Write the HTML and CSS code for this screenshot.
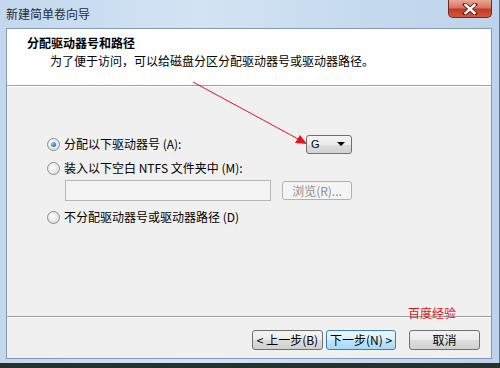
FILE: index.html
```html
<!DOCTYPE html>
<html lang="zh">
<head>
<meta charset="utf-8">
<title>新建简单卷向导</title>
<link rel="stylesheet" href="styles.css">
</head>
<body>
<div class="window">
  <div class="titlebar">
    <span class="title">新建简单卷向导</span>
    <div class="close">
      <svg width="16" height="12" viewBox="0 0 16 12"><path d="M3 1.5 L13 10.5 M13 1.5 L3 10.5" stroke="#5a1a12" stroke-width="4" stroke-linecap="square"/><path d="M3.5 2 L12.5 10 M12.5 2 L3.5 10" stroke="#ffffff" stroke-width="2.4" stroke-linecap="square"/></svg>
    </div>
  </div>
  <div class="client">
    <div class="header">
      <div class="h-title">分配驱动器号和路径</div>
      <div class="h-sub">为了便于访问，可以给磁盘分区分配驱动器号或驱动器路径。</div>
    </div>
    <div class="body">
      <div class="options">
        <div class="row row1">
          <span class="radio checked"></span>
          <span class="label">分配以下驱动器号 (A):</span>
          <div class="combo"><span class="combo-text">G</span><span class="combo-arrow"></span></div>
        </div>
        <div class="row row2">
          <span class="radio"></span>
          <span class="label">装入以下空白 NTFS 文件夹中 (M):</span>
        </div>
        <div class="row row-input">
          <div class="textbox"></div>
          <div class="btn disabled browse">浏览(R)...</div>
        </div>
        <div class="row row3">
          <span class="radio"></span>
          <span class="label">不分配驱动器号或驱动器路径 (D)</span>
        </div>
      </div>
    </div>
    <div class="footer">
      <div class="btn back">&lt; 上一步(B)</div>
      <div class="btn next">下一步(N) &gt;</div>
      <div class="btn cancel">取消</div>
    </div>
  </div>
</div>
<div class="watermark">百度经验</div>
<svg class="arrow" width="500" height="368" viewBox="0 0 500 368">
  <line x1="193" y1="82" x2="300" y2="140" stroke="#e3141b" stroke-width="1"/>
  <polygon points="307,144 295,143 300,135" fill="#e3141b"/>
</svg>
</body>
</html>
```
FILE: styles.css
```css
html, body {
  margin: 0;
  padding: 0;
}
body {
  width: 500px;
  height: 368px;
  overflow: hidden;
  background: #27312b;
  font-family: "Noto Sans CJK SC", "Liberation Sans", sans-serif;
  font-size: 12px;
  color: #000;
  position: relative;
}
.window {
  width: 500px;
  height: 363px;
  box-sizing: border-box;
  padding: 0 7px 4px 6px;
  background: linear-gradient(90deg, #c3d8ee 0%, #d3e3f4 40%, #c7dbef 70%, #bdd3eb 100%);
  border-right: 1px solid #5e7590;
  display: flex;
  flex-direction: column;
}
.titlebar {
  height: 28px;
  display: flex;
  align-items: flex-start;
}
.title {
  margin-top: 6px;
  line-height: 16px;
  color: #1e2a36;
  font-size: 12px;
}
.close {
  margin-left: auto;
  width: 44px;
  height: 18px;
  box-sizing: border-box;
  border: 1px solid #6b2a22;
  border-top: none;
  border-radius: 0 0 5px 5px;
  background: linear-gradient(#e9a797 0%, #d87462 45%, #c23a24 55%, #d2583f 100%);
  display: flex;
  align-items: center;
  justify-content: center;
}
.close svg {
  display: block;
}
.client {
  flex: 1;
  border: 1px solid #8399b3;
  background: #f0f0f0;
  display: flex;
  flex-direction: column;
}
.header {
  height: 57px;
  background: #fff;
  border-bottom: 1px solid #a0a0a0;
  padding: 7px 0 0 20px;
  box-sizing: border-box;
}
.h-title {
  font-weight: bold;
  line-height: 14px;
}
.h-sub {
  margin-left: 23px;
  margin-top: 4px;
  line-height: 14px;
}
.body {
  flex: 1;
  border-top: 1px solid #fff;
  border-bottom: 1px solid #a0a0a0;
  padding: 47px 0 0 40px;
}
.options {
  width: 305px;
  display: flex;
  flex-direction: column;
}
.row {
  display: flex;
  align-items: center;
}
.row1 { height: 20px; }
.row2 { height: 18px; margin-top: 5px; }
.row-input { height: 21px; margin-top: 3px; padding-left: 18px; }
.row3 { height: 18px; margin-top: 7px; }
.radio {
  width: 11px;
  height: 11px;
  border-radius: 50%;
  border: 1px solid #8a8c8f;
  background: radial-gradient(circle at 40% 40%, #ffffff 0%, #e6e6e6 60%, #cfcfcf 100%);
  margin-right: 4px;
  position: relative;
  flex: none;
}
.radio.checked::after {
  content: "";
  position: absolute;
  left: 3px;
  top: 3px;
  width: 5px;
  height: 5px;
  border-radius: 50%;
  background: radial-gradient(circle at 35% 35%, #8fd0ff 0%, #1f6fc0 70%, #10457e 100%);
}
.label {
  line-height: 16px;
  white-space: nowrap;
}
.combo {
  margin-left: auto;
  width: 46px;
  height: 19px;
  box-sizing: border-box;
  border: 1px solid #707070;
  border-radius: 3px;
  background: linear-gradient(#f4f4f4 0%, #ececec 50%, #dcdcdc 51%, #d4d4d4 100%);
  display: flex;
  align-items: center;
  padding: 0 6px 0 4px;
}
.combo-text {
  line-height: 14px;
  font-family: "Liberation Sans", sans-serif;
  font-size: 11px;
}
.combo-arrow {
  margin-left: auto;
  width: 0;
  height: 0;
  border-left: 4px solid transparent;
  border-right: 4px solid transparent;
  border-top: 4px solid #000;
}
.textbox {
  width: 206px;
  height: 21px;
  box-sizing: border-box;
  border: 1px solid #b4b7ba;
  background: #f3f3f3;
}
.btn {
  height: 20px;
  box-sizing: border-box;
  border: 1px solid #707070;
  border-radius: 3px;
  background: linear-gradient(#f3f3f3 0%, #ebebeb 50%, #dddddd 51%, #cfcfcf 100%);
  display: flex;
  align-items: center;
  justify-content: center;
  line-height: 14px;
  white-space: nowrap;
}
.btn.disabled {
  border-color: #adb2b5;
  background: #f4f4f4;
  color: #8f8f8f;
}
.browse {
  margin-left: auto;
  width: 70px;
  height: 19px;
}
.footer {
  height: 41px;
  border-top: 1px solid #fff;
  display: flex;
  align-items: flex-start;
  justify-content: flex-end;
  padding: 12px 11px 0 0;
  box-sizing: border-box;
}
.back { width: 71px; }
.next {
  width: 70px;
  margin-left: 3px;
  border-color: #3c7fb1;
  background: linear-gradient(#eaf6fd 0%, #d9f0fc 50%, #bee6fd 51%, #a7d9f5 100%);
}
.cancel {
  width: 71px;
  margin-left: 13px;
}
.watermark {
  position: absolute;
  left: 408px;
  top: 306px;
  color: #e3141b;
  font-size: 12px;
  line-height: 14px;
}
.arrow {
  position: absolute;
  left: 0;
  top: 0;
  pointer-events: none;
}
```
